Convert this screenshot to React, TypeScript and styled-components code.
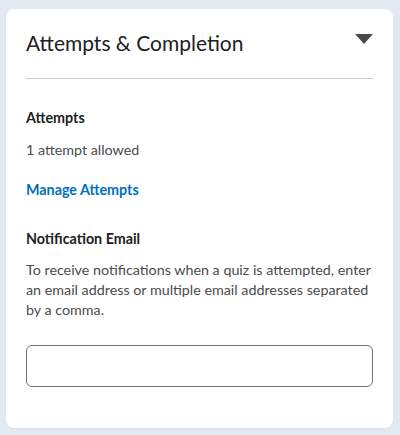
import { createGlobalStyle } from "styled-components";
import styled from "styled-components";

const GlobalStyle = createGlobalStyle({
  "html, body": {
    margin: 0,
    padding: 0,
    background: "#e3e9f1"
  },
  body: {
    fontFamily: "Lato, 'Noto Sans', sans-serif",
    color: "#202122"
  }
});

const Page = styled.div({
  padding: "9px 7px 7px 6px",
  minHeight: "435px",
  boxSizing: "border-box"
});

const Card = styled.section({
  background: "#ffffff",
  borderRadius: "8px",
  padding: "22px 20px 41px 20px",
  boxShadow: "0 1px 2px rgba(0, 0, 0, 0.04)"
});

const Header = styled.div({
  display: "flex",
  justifyContent: "space-between",
  alignItems: "flex-start",
  paddingBottom: "23px",
  borderBottom: "1px solid #c5cbd0"
});

const Title = styled.h2({
  margin: 0,
  fontSize: "21px",
  lineHeight: "24px",
  fontWeight: 400,
  color: "#202122"
});

const Toggle = styled.button({
  border: 0,
  padding: 0,
  background: "none",
  marginTop: "3px",
  display: "flex",
  cursor: "pointer"
});

const Label = styled.h3<{ $top: number }>(({ $top }) => ({
  margin: `${$top}px 0 0`,
  fontSize: "14.3px",
  lineHeight: "20px",
  fontWeight: 700,
  color: "#202122"
}));

const Text = styled.p<{ $top: number }>(({ $top }) => ({
  margin: `${$top}px 0 0`,
  fontSize: "14.3px",
  lineHeight: "20px",
  color: "#494c4e"
}));

const Link = styled.a({
  display: "block",
  marginTop: "20px",
  fontSize: "14.3px",
  lineHeight: "20px",
  fontWeight: 700,
  color: "#006fbf",
  textDecoration: "none"
});

const EmailInput = styled.input({
  display: "block",
  boxSizing: "border-box",
  width: "100%",
  height: "42px",
  marginTop: "25px",
  border: "1px solid #6e7477",
  borderRadius: "6px",
  padding: "0 12px",
  fontFamily: "inherit",
  fontSize: "14.3px",
  color: "#202122",
  background: "#fff"
});

export default function App() {
  return (
    <Page>
      <GlobalStyle />
      <Card>
        <Header>
          <Title>Attempts &amp; Completion</Title>
          <Toggle aria-label="Collapse">
            <svg width="18" height="10" viewBox="0 0 18 10">
              <polygon points="0,0 18,0 9,10" fill="#494c4e" />
            </svg>
          </Toggle>
        </Header>
        <Label $top={29}>Attempts</Label>
        <Text $top={12}>1 attempt allowed</Text>
        <Link href="#">Manage Attempts</Link>
        <Label $top={29}>Notification Email</Label>
        <Text $top={11}>
          To receive notifications when a quiz is attempted, enter an email
          address or multiple email addresses separated by a comma.
        </Text>
        <EmailInput type="text" aria-label="Notification Email" />
      </Card>
    </Page>
  );
}
